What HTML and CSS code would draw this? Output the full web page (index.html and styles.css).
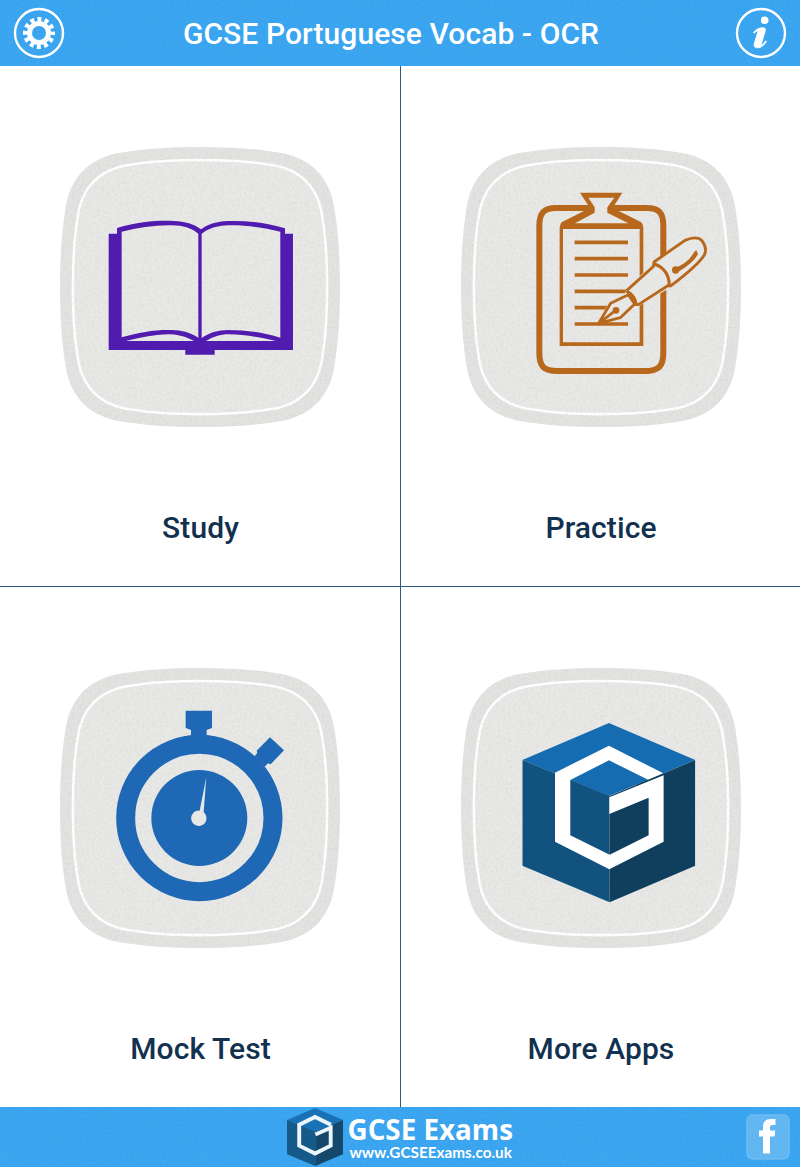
FILE: index.html
```
<!DOCTYPE html>
<html lang="en">
<head>
	<meta charset="UTF-8">
	<meta name="viewport" content="width=device-width, initial-scale=1.0">

	<title>GCSE Portuguese Vocab - OCR</title>

	<link rel="stylesheet" href="styles.css">
</head>
<body>
	<!-- Shapes shared between the tiles and the footer -->
	<svg class="defs" width="0" height="0" aria-hidden="true">
		<defs>
			<filter id="grain" x="0" y="0" width="100%" height="100%" color-interpolation-filters="sRGB">
				<feTurbulence type="fractalNoise" baseFrequency=".4" numOctaves="2" seed="4"/>
				<feColorMatrix values="0 0 0 0 .5  0 0 0 0 .5  0 0 0 0 .5  .2 0 0 0 -.085"/>
				<feComposite in2="SourceGraphic" operator="in"/>
				<feMerge>
					<feMergeNode in="SourceGraphic"/>
					<feMergeNode/>
				</feMerge>
			</filter>
			<path id="squircle" d="M140 0C170 0 197 2 215 5C250 9 271 30 275 65C278 83 280 110 280 140C280 170 278 197 275 215C271 250 250 271 215 275C197 278 170 280 140 280C110 280 83 278 65 275C30 271 9 250 5 215C2 197 0 170 0 140C0 110 2 83 5 65C9 30 30 9 65 5C83 2 110 0 140 0Z"/>
			<symbol id="plate" viewBox="0 0 280 280">
				<use href="#squircle" fill="#e3e3e2"/>
				<use href="#squircle" fill="#e8e8e6" stroke="#fff" stroke-width="2.8" transform="translate(12.9 12.9) scale(.908)"/>
			</symbol>
			<g id="faces">
				<path fill="#166cb0" d="M297 39L556 150L297 258L37 150Z"/>
				<path fill="#11527f" d="M37 150L299 258V577L37 467Z"/>
				<path fill="#103f5e" d="M556 150L299 258V577L556 467Z"/>
			</g>
			<symbol id="cube" viewBox="37 39 519 538">
				<use href="#faces"/>
				<path fill="#fff" d="M297 107L460 190L416 210L297 151L181 210V376L299 434L416 376V263L298 312V262L461 196V395L298 478L135 395V188Z"/>
				<path fill="none" stroke="#103f5e" stroke-width="3" d="M380 225L462 191"/>
			</symbol>
			<symbol id="cube-small" viewBox="37 39 519 538">
				<use href="#faces"/>
				<path fill="none" stroke="#fff" stroke-width="36" d="M444 194L297 122L150 194V388L297 462L442 388V222L300 284"/>
			</symbol>
		</defs>
	</svg>

	<header class="bar">
		<button class="round" aria-label="Settings">
			<svg width="52" height="52" viewBox="0 0 52 52">
				<circle cx="26" cy="26" r="24" fill="none" stroke="#fff" stroke-width="2.4"/>
				<circle cx="26" cy="26" r="9.5" fill="none" stroke="#fff" stroke-width="5"/>
				<circle cx="26" cy="26" r="13.8" fill="none" stroke="#fff" stroke-width="4.4" stroke-dasharray="4 3.225" stroke-dashoffset="2"/>
			</svg>
		</button>
		<h1>GCSE Portuguese Vocab - OCR</h1>
		<button class="round" aria-label="Information">
			<svg width="52" height="52" viewBox="0 0 52 52">
				<circle cx="26" cy="26" r="24" fill="none" stroke="#fff" stroke-width="2.4"/>
				<circle cx="29.7" cy="13.2" r="3.8" fill="#fff"/>
				<path fill="#fff" stroke="#fff" stroke-width=".9" stroke-linejoin="round" d="M18.500 25.500C21 22.500 24 20.800 27.500 20.800C30.500 20.800 30.800 22 30.100 24.500L26.500 36.500C25.900 38.800 26.500 38.600 27.500 37.600L30.800 33.800L31.500 34.400C29 38.500 26 40.800 22.500 40.800C19.400 40.800 18.600 39 19.400 36.300L22.800 25.200C23.300 23.400 22 23.600 19.300 26.100Z"/>
			</svg>
		</button>
	</header>

	<main>
		<a class="tile">
			<svg class="icon" viewBox="0 0 280 280">
				<use href="#plate" filter="url(#grain)"/>
				<g transform="translate(-10 -7) scale(.3333)" fill="#521bb0">
					<path fill-rule="evenodd" d="M176 281H201V264C270 243 330 241 372 243C405 244 432 252 453 268C474 252 501 244 534 243C590 241 650 249 705 265V281H729V630H494V644H406V630H176ZM215 275V592C270 576 320 568 365 570C395 570 424 579 445 593V281C422 263 401 257 365 256C315 255 265 263 215 275ZM455 281V594C475 579 505 570 535 570C585 570 640 577 691 593V275C640 263 590 255 535 256C500 257 477 265 455 281ZM228 603H432C405 588 377 583 352 583C310 584 270 593 228 603ZM468 603H678C630 592 580 583 537 583C510 583 490 590 468 603Z"/>
				</g>
			</svg>
			<span>Study</span>
		</a>
		<a class="tile">
			<svg class="icon" viewBox="0 0 280 280">
				<use href="#plate" filter="url(#grain)"/>
				<g transform="translate(59 33) scale(.3333)" fill="none" stroke="#b8681c">
					<path stroke-width="18" d="M218 84H108C72 84 58 98 58 138V518C58 560 72 573 112 573H375C415 573 430 560 430 518V138C430 98 417 84 380 84H268"/>
					<path fill="#b8681c" stroke="none" fill-rule="evenodd" d="M180 38H307L278 84L363 126Q370 132 370 146V498H119V146Q118 133 126 126L210 84ZM205 53L224 82V98L165 130H325L262 98V82L283 53ZM129 147V487H359V147Z"/>
					<path stroke-width="11" d="M164 187H324M164 236H324M164 285H324M164 334H324M164 383H324M164 432H324"/>
					<path fill="#e7e7e5" stroke="none" d="M236 430L262 375L316 338L320 325L408 243L520 170L548 176L561 212L540 250L455 320L355 379L338 378L308 414Z"/>
					<path stroke-width="8.5" stroke-linejoin="round" d="M236 430L272 370L325 344L344 372L301 413ZM320 332L403 257M355 374L442 318M319 333L333 342Q345 352 348 374L358 374M400 260L402 246L495 181Q530 166 546 182Q563 206 553 225Q535 255 452 318L440 316M236 430L287 391"/>
					<path stroke-width="9" d="M323 336Q346 348 349 375M404 252Q446 268 448 314"/>
					<circle cx="288" cy="391" r="10" fill="#b8681c" stroke="none"/>
					<circle cx="467" cy="270" r="11" fill="#b8681c" stroke="none"/>
					<path fill="#b8681c" stroke="none" d="M462 264Q503 252 522 217L529 210L534 223Q519 251 472 277Z"/>
				</g>
			</svg>
			<span>Practice</span>
		</a>
		<a class="tile">
			<svg class="icon" viewBox="0 0 280 280">
				<use href="#plate" filter="url(#grain)"/>
				<g transform="translate(40 32) scale(.3333)" fill="#1e68b5">
					<circle cx="298" cy="354" r="221" fill="none" stroke="#1e68b5" stroke-width="57"/>
					<circle cx="298" cy="354" r="144"/>
					<path d="M257 32H336V84L320 90V112H273V90L257 84Z"/>
					<path d="M510 112L552 151L512 193L504 190L494 200L464 168L472 159L470 152Z"/>
					<path fill="#e7e7e5" d="M319 231L311 337A23 23 0 1 1 299 332Z"/>
				</g>
			</svg>
			<span>Mock Test</span>
		</a>
		<a class="tile">
			<svg class="icon" viewBox="0 0 280 280">
				<use href="#plate" filter="url(#grain)"/>
				<use href="#cube" x="61.3" y="55" width="173" height="179.3"/>
			</svg>
			<span>More Apps</span>
		</a>
	</main>

	<footer class="bar">
		<a class="brand">
			<svg class="logo" width="56" height="58"><use href="#cube-small"/></svg>
			<span class="brand-text">
				<strong>GCSE Exams</strong>
				<small>www.GCSEExams.co.uk</small>
			</span>
		</a>
		<a class="facebook" aria-label="Facebook">
			<svg width="44" height="46" viewBox="0 0 44 46">
				<rect x=".7" y=".7" width="42.6" height="44.6" rx="6" fill="#fff" fill-opacity=".2" stroke="#fff" stroke-opacity=".15" stroke-width="1.4"/>
				<path fill="#fff" d="M17 39.500V22.500H13V16.500H17V13.500C17 8 19.500 5 24.500 5H29.500V11H26.500C24.500 11 24 12 24 13.500V16.500H29.300L28.600 22.500H24V39.500Z"/>
			</svg>
		</a>
	</footer>
</body>
</html>
```
FILE: styles.css
```
* { box-sizing: border-box; }

body {
	display       : flex;
	flex-direction: column;
	height        : 100vh;
	margin        : 0;
	font-family   : Roboto, 'Liberation Sans', sans-serif;
	background    : #fff;
}

.defs { position: absolute; }

button {
	padding   : 0;
	border    : 0;
	background: none;
}

svg { display: block; }

.bar {
	display         : grid;
	align-items     : center;
	color           : #fff;
	background-color: #37a4f1;
	background-image: url("data:image/svg+xml,%3Csvg xmlns='http://www.w3.org/2000/svg' width='200' height='66'%3E%3Cfilter id='n' x='0' y='0' width='100%25' height='100%25'%3E%3CfeTurbulence type='fractalNoise' baseFrequency='.35' numOctaves='3' stitchTiles='stitch'/%3E%3CfeColorMatrix values='0 0 0 0 .1 0 0 0 0 .4 0 0 0 0 .75 .8 0 0 0 -.3'/%3E%3C/filter%3E%3Crect width='200' height='66' filter='url(%23n)'/%3E%3C/svg%3E");
}

header {
	grid-template-columns: 52px 1fr 52px;
	height               : 66px;
	padding              : 0 13px;
}

h1 {
	margin        : 2px 0 0 -18px;
	font-size     : 30px;
	font-weight   : 500;
	line-height   : 36px;
	letter-spacing: .08px;
	text-align    : center;
	white-space   : nowrap;
}

main {
	display              : grid;
	flex                 : 1;
	grid-template-columns: 1fr 1fr;
	grid-template-rows   : 521px 520px;
}

.tile {
	display       : flex;
	flex-direction: column;
	align-items   : center;
	padding-top   : 81px;
}

.tile:nth-child(odd) {
	margin-right: -1px;
	border-right: 1px solid #2d5b84;
}

.tile:nth-child(even) { padding-left: 2px; }

.tile:nth-child(-n+2) { border-bottom: 1px solid #2d5b84; }

.icon {
	width : 280px;
	height: 280px;
}

.tile span {
	margin-top    : 83px;
	color         : #12314f;
	font-size     : 30px;
	font-weight   : 500;
	line-height   : 36px;
	letter-spacing: .1px;
}

.tile:nth-child(odd) span { padding-left: 1px; }

footer {
	grid-template-columns: 1fr auto 1fr;
	height               : 60px;
	padding              : 0 10px;
}

.brand {
	display    : flex;
	grid-column: 2;
	align-items: center;
	gap        : 5px;
}

.logo { opacity: .9; }

.brand-text {
	display       : flex;
	flex-direction: column;
	width         : 166px;
}

.brand strong {
	font       : bold 27.8px/29px 'Open Sans', sans-serif;
	white-space: nowrap;
}

.brand small {
	margin-left: 2px;
	font       : bold 15.3px/16px Lato, sans-serif;
	white-space: nowrap;
}

.facebook { justify-self: end; }
```
